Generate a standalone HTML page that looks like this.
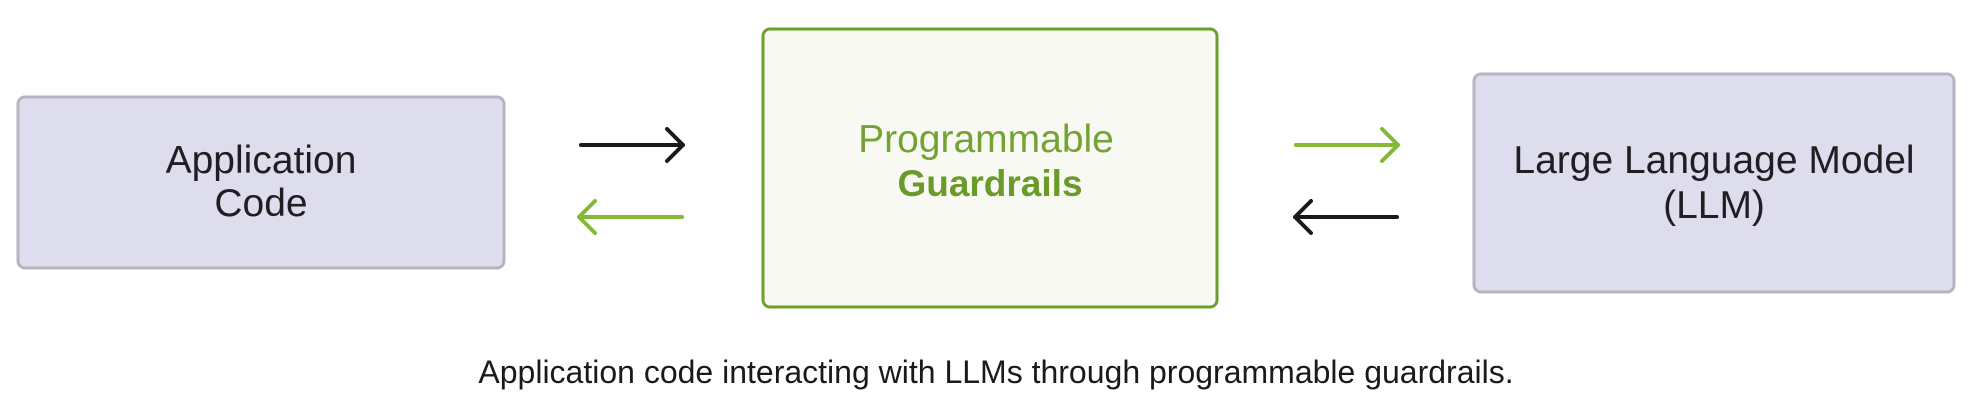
<!DOCTYPE html>
<html><head><meta charset="utf-8"><style>
html,body{margin:0;padding:0;background:#fff;}
svg{display:block;}
</style></head><body>
<svg width="1976" height="414" viewBox="0 0 1976 414" xmlns="http://www.w3.org/2000/svg">
<rect x="18" y="97" width="486" height="171" rx="7" fill="#dedded" stroke="#b5b4c1" stroke-width="3"/>
<rect x="763" y="29" width="454" height="278" rx="7" fill="#f8f9f2" stroke="#6c9f2c" stroke-width="3"/>
<rect x="1474" y="74" width="480" height="218" rx="7" fill="#dedded" stroke="#b5b4c1" stroke-width="3"/>
<g font-family="Liberation Sans, Arial, sans-serif" text-anchor="middle">
<text x="261" y="173" font-size="39" fill="#1f1f23">Application</text>
<text x="261" y="216" font-size="39" fill="#1f1f23">Code</text>
<text x="986" y="152" font-size="39" fill="#74a234">Programmable</text>
<text x="990" y="196" font-size="37" font-weight="bold" fill="#6a9a2a">Guardrails</text>
<text x="1714" y="173" font-size="39" fill="#1f1f23">Large Language Model</text>
<text x="1714" y="218" font-size="39" fill="#1f1f23">(LLM)</text>
<text x="996" y="383" font-size="32" fill="#1a1a1a">Application code interacting with LLMs through programmable guardrails.</text>
</g>
<g fill="none" stroke-width="4" stroke-linecap="round" stroke-linejoin="round">
<path d="M581 145H683M667 129L683 145L667 161" stroke="#1a1a1a"/>
<path d="M682 217H579M595 201L579 217L595 233" stroke="#84b935"/>
<path d="M1296 145H1398M1382 129L1398 145L1382 161" stroke="#84b935"/>
<path d="M1397 217H1295M1311 201L1295 217L1311 233" stroke="#1a1a1a"/>
</g>
</svg>
</body></html>
